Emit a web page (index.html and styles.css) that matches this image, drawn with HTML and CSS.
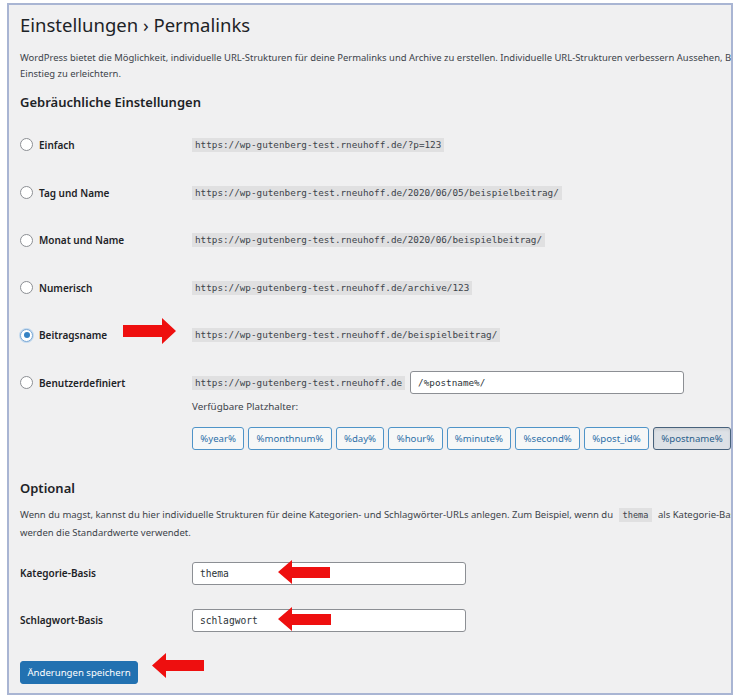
FILE: index.html
```html
<!DOCTYPE html>
<html lang="de">
<head>
<meta charset="utf-8">
<title>Einstellungen › Permalinks</title>
<link rel="stylesheet" href="styles.css">
</head>
<body>
<div class="frame">
  <h1 class="title">Einstellungen › Permalinks</h1>
  <p class="desc">WordPress bietet die Möglichkeit, individuelle URL-Strukturen für deine Permalinks und Archive zu erstellen. Individuelle URL-Strukturen verbessern Aussehen, B<br>Einstieg zu erleichtern.</p>
  <h2 class="section">Gebräuchliche Einstellungen</h2>
  <div class="rows">
    <div class="row">
      <label class="opt"><span class="radio"></span>Einfach</label>
      <div class="cell"><code class="url">https://wp-gutenberg-test.rneuhoff.de/?p=123</code></div>
    </div>
    <div class="row">
      <label class="opt"><span class="radio"></span>Tag und Name</label>
      <div class="cell"><code class="url">https://wp-gutenberg-test.rneuhoff.de/2020/06/05/beispielbeitrag/</code></div>
    </div>
    <div class="row">
      <label class="opt"><span class="radio"></span>Monat und Name</label>
      <div class="cell"><code class="url">https://wp-gutenberg-test.rneuhoff.de/2020/06/beispielbeitrag/</code></div>
    </div>
    <div class="row">
      <label class="opt"><span class="radio"></span>Numerisch</label>
      <div class="cell"><code class="url">https://wp-gutenberg-test.rneuhoff.de/archive/123</code></div>
    </div>
    <div class="row">
      <label class="opt"><span class="radio checked"></span>Beitragsname</label>
      <div class="cell"><code class="url">https://wp-gutenberg-test.rneuhoff.de/beispielbeitrag/</code></div>
    </div>
    <div class="row custom">
      <label class="opt tall"><span class="radio"></span>Benutzerdefiniert</label>
      <div class="custom-body">
        <div class="custom-line">
          <code class="url">https://wp-gutenberg-test.rneuhoff.de</code>
          <div class="input wide">/%postname%/</div>
        </div>
        <div class="hint">Verfügbare Platzhalter:</div>
        <div class="tags">
          <span class="tag">%year%</span>
          <span class="tag">%monthnum%</span>
          <span class="tag">%day%</span>
          <span class="tag">%hour%</span>
          <span class="tag">%minute%</span>
          <span class="tag">%second%</span>
          <span class="tag">%post_id%</span>
          <span class="tag active">%postname%</span>
        </div>
      </div>
    </div>
  </div>

  <h2 class="section optional">Optional</h2>
  <p class="desc2">Wenn du magst, kannst du hier individuelle Strukturen für deine Kategorien- und Schlagwörter-URLs anlegen. Zum Beispiel, wenn du <code class="inline">thema</code> als Kategorie-Bas<br>werden die Standardwerte verwendet.</p>

  <div class="field first">
    <span class="flabel">Kategorie-Basis</span>
    <div class="input base">thema</div>
  </div>
  <div class="field second">
    <span class="flabel">Schlagwort-Basis</span>
    <div class="input base">schlagwort</div>
  </div>
  <button class="save">Änderungen speichern</button>
</div>

<svg class="arrows" width="736" height="699" viewBox="0 0 736 699">
  <polygon points="123,325 162,325 162,318 176,331 162,344 162,337 123,337" fill="#ee0f0f"/>
  <polygon points="278,572 292,560 292,567 330,567 330,578 292,578 292,584" fill="#ee0f0f"/>
  <polygon points="278,619 292,607 292,614 331,614 331,625 292,625 292,631" fill="#ee0f0f"/>
  <polygon points="152,665.5 166,653 166,660 204,660 204,671 166,671 166,678" fill="#ee0f0f"/>
</svg>
</body>
</html>
```

FILE: styles.css
```css
html, body {
  margin: 0;
  padding: 0;
  background: #ffffff;
}

body {
  font-family: "Noto Sans", "Open Sans", sans-serif;
  color: #3c434a;
  position: relative;
  width: 736px;
  height: 699px;
  overflow: hidden;
}

.frame {
  box-sizing: border-box;
  margin: 3px 0 0 7px;
  width: 726px;
  height: 692px;
  border: 2px solid #a9b5d3;
  background: #f0f0f1;
  padding: 8px 0 0 11px;
  overflow: hidden;
}

.title {
  margin: 0;
  font-size: 18.5px;
  line-height: 24px;
  font-weight: 400;
  color: #1d2327;
  white-space: nowrap;
}

.desc {
  margin: 13px 0 0;
  font-size: 9.45px;
  line-height: 15.5px;
  white-space: nowrap;
}

.section {
  margin: 12px 0 0;
  font-size: 13px;
  line-height: 18px;
  font-weight: 600;
  color: #1d2327;
}

.rows {
  margin-top: 10.2px;
}

.row {
  display: grid;
  grid-template-columns: 172px auto;
  align-items: center;
  height: 47.6px;
}

.cell {
  display: flex;
  align-items: center;
}

.opt {
  display: flex;
  align-items: center;
  gap: 6px;
  font-size: 10px;
  font-weight: 600;
  color: #1d2327;
  white-space: nowrap;
}

.radio {
  box-sizing: border-box;
  width: 13px;
  height: 13px;
  border: 1px solid #8c8f94;
  border-radius: 50%;
  background: #ffffff;
  display: flex;
  align-items: center;
  justify-content: center;
}

.radio.checked {
  border-color: #7aa7d4;
  box-shadow: 0 0 0 1px #c5daee;
}

.radio.checked::after {
  content: "";
  width: 6px;
  height: 6px;
  border-radius: 50%;
  background: #3582c4;
}

.url {
  display: block;
  font-family: "DejaVu Sans Mono", "Liberation Mono", monospace;
  font-size: 9.3px;
  line-height: 14px;
  padding: 0 3px;
  background: #e0e0e1;
  color: #3c434a;
  white-space: nowrap;
}

.row.custom {
  height: auto;
  align-items: start;
  padding-top: 12px;
}

.opt.tall {
  height: 23px;
}

.custom-body {
  display: flex;
  flex-direction: column;
}

.custom-line {
  display: flex;
  align-items: center;
  gap: 5px;
}

.input {
  box-sizing: border-box;
  height: 23px;
  border: 1px solid #8c8f94;
  border-radius: 3px;
  background: #ffffff;
  font-family: "DejaVu Sans Mono", "Liberation Mono", monospace;
  font-size: 9.3px;
  line-height: 21px;
  padding: 0 7px;
  color: #2c3338;
}

.input.wide {
  width: 274px;
}

.hint {
  margin-top: 5px;
  font-size: 9.8px;
  line-height: 15.5px;
}

.tags {
  display: flex;
  gap: 4px;
  margin-top: 12px;
  white-space: nowrap;
}

.tag {
  box-sizing: border-box;
  flex: none;
  height: 23px;
  padding: 0 7.3px;
  border: 1px solid #4f94c8;
  border-radius: 3px;
  background: #f6f7f7;
  color: #2d70a8;
  font-size: 9.6px;
  line-height: 21px;
}

.tag.active {
  background: #dde1e6;
  border-color: #48627c;
  color: #2a5f8c;
  box-shadow: inset 0 2px 3px rgba(0,0,0,0.08);
}

.section.optional {
  margin-top: 29px;
}

.desc2 {
  margin: 9.5px 0 0;
  font-size: 9.5px;
  line-height: 17px;
  white-space: nowrap;
}

.inline {
  font-family: "DejaVu Sans Mono", "Liberation Mono", monospace;
  font-size: 8.6px;
  padding: 2px 4px;
  margin: 0 3px;
  background: #e0e0e1;
  color: #3c434a;
}

.field {
  display: grid;
  grid-template-columns: 172px auto;
  align-items: center;
}

.field.first {
  margin-top: 20.5px;
}

.field.second {
  margin-top: 24px;
}

.flabel {
  font-size: 10px;
  font-weight: 600;
  color: #1d2327;
}

.input.base {
  width: 274px;
  font-size: 9.6px;
}

.save {
  display: block;
  margin-top: 29px;
  box-sizing: border-box;
  width: 118px;
  height: 23px;
  padding: 0;
  border: 1px solid #2271b1;
  border-radius: 3px;
  background: #2271b1;
  color: #ffffff;
  font-family: "Noto Sans", "Open Sans", sans-serif;
  font-size: 9.6px;
  line-height: 21px;
}

.arrows {
  position: absolute;
  left: 0;
  top: 0;
  pointer-events: none;
}
```
